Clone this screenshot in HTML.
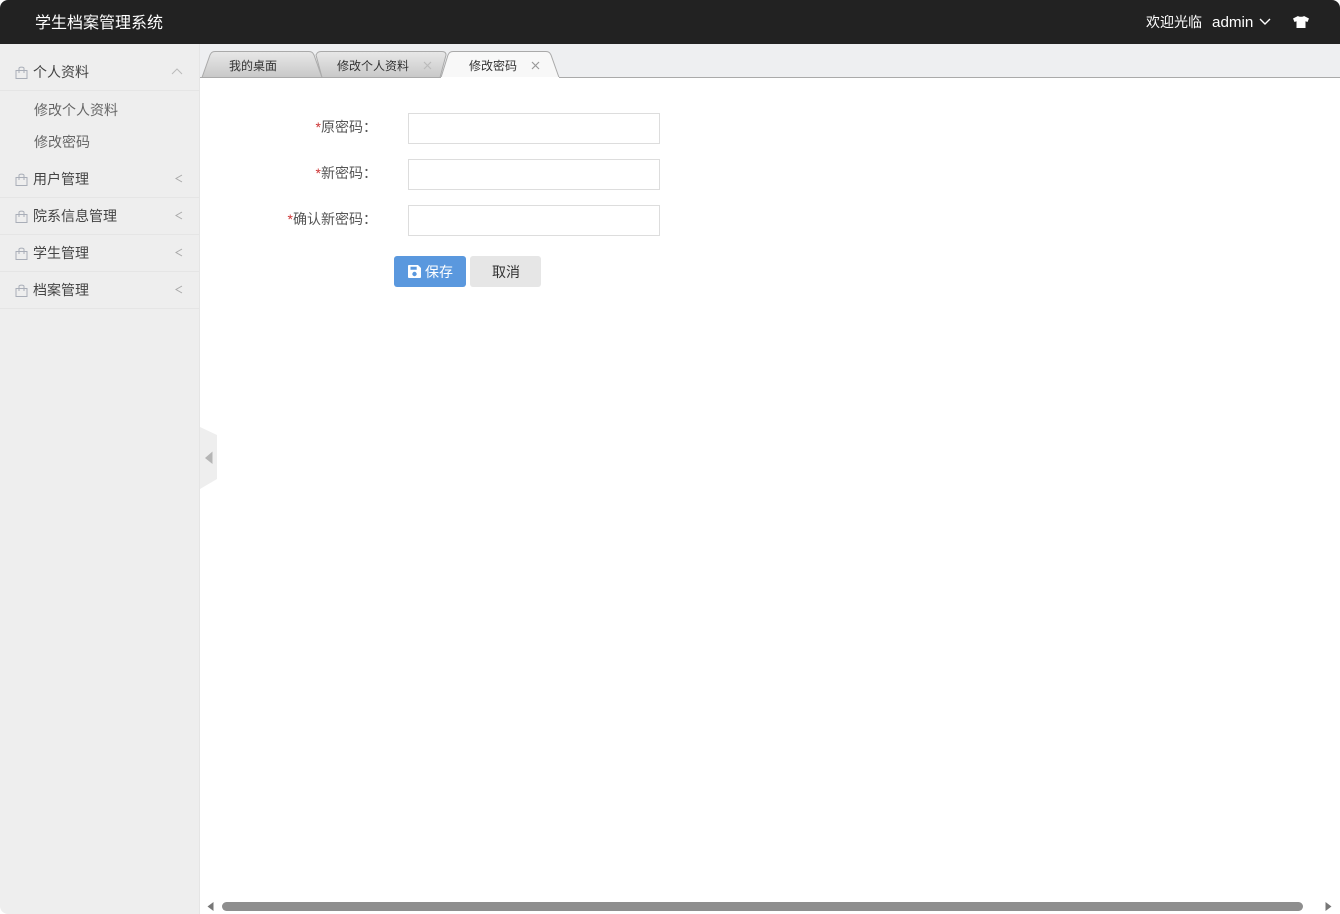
<!DOCTYPE html>
<html lang="zh"><head><meta charset="utf-8"><title>学生档案管理系统</title>
<style>
html,body{margin:0;padding:0;background:#fff}
body{width:1340px;height:914px;overflow:hidden;position:relative;font-family:"Liberation Sans","Noto Sans CJK SC",sans-serif;font-size:14px;color:#333}
#app{position:absolute;left:0;top:0;width:1340px;height:914px;overflow:hidden;border-radius:8px;background:#fff}
.a{position:absolute;white-space:nowrap;line-height:20px}
#top{left:0;top:0;width:1340px;height:44px;background:#222}
#side{left:0;top:44px;width:199px;height:870px;background:#eee;border-right:1px solid #e5e5e5}
#tabbar{left:200px;top:44px;width:1140px;height:33px;background:#eeeff1;border-bottom:1px solid #aaa}
.ln{position:absolute;left:0;width:199px;height:1px;background:#e5e5e5}
.m{color:#444;font-size:14px}
.s{color:#666;font-size:14px}
.lab{color:#555;font-size:14px;text-align:right}
.lab b{color:#c33;font-weight:normal}
.inp{position:absolute;left:408px;width:250px;height:29px;border:1px solid #ddd;background:#fff}
</style></head><body><div id="app">
<div class="a" id="top"></div>
<div class="a" style="left:35px;top:12px;font-size:16px;line-height:22px;color:#fff;transform:translateY(1px)">学生档案管理系统</div>
<div class="a" style="left:1146px;top:12px;font-size:14px;color:#fff">欢迎光临</div>
<div class="a" style="left:1212px;top:13px;font-size:15.2px;line-height:20px;color:#fff">admin</div>
<svg class="a" style="left:1258px;top:17px" width="14" height="10" viewBox="0 0 14 10"><path d="M2 2L7 7L12 2" fill="none" stroke="#fff" stroke-width="1.4"/></svg>
<svg class="a" style="left:1292px;top:15px" width="18" height="14" viewBox="0 0 18 14"><path d="M6 1L1 3.500L2.500 7L4.500 6.200V13H13.500V6.200L15.500 7L17 3.500L12 1C11 2 7 2 6 1Z" fill="#fff"/></svg>
<div class="a" style="left:696px;top:44px;width:3px;height:1px;background:#999"></div>
<div class="a" style="left:1197px;top:44px;width:3px;height:1px;background:#999"></div>

<div class="a" id="side">
<div class="ln" style="top:46px"></div><div class="ln" style="top:153px"></div><div class="ln" style="top:190px"></div><div class="ln" style="top:227px"></div><div class="ln" style="top:264px"></div>
</div>
<svg class="a" style="left:15px;top:66px" width="13" height="13" viewBox="0 0 13 13"><path d="M1 4.500H12V12.500H1ZM4 7V2.500C4 .7 9 .7 9 2.500V7" fill="none" stroke="#a9aeb8"/></svg>
<svg class="a" style="left:15px;top:173px" width="13" height="13" viewBox="0 0 13 13"><path d="M1 4.500H12V12.500H1ZM4 7V2.500C4 .7 9 .7 9 2.500V7" fill="none" stroke="#a9aeb8"/></svg>
<svg class="a" style="left:15px;top:210px" width="13" height="13" viewBox="0 0 13 13"><path d="M1 4.500H12V12.500H1ZM4 7V2.500C4 .7 9 .7 9 2.500V7" fill="none" stroke="#a9aeb8"/></svg>
<svg class="a" style="left:15px;top:247px" width="13" height="13" viewBox="0 0 13 13"><path d="M1 4.500H12V12.500H1ZM4 7V2.500C4 .7 9 .7 9 2.500V7" fill="none" stroke="#a9aeb8"/></svg>
<svg class="a" style="left:15px;top:284px" width="13" height="13" viewBox="0 0 13 13"><path d="M1 4.500H12V12.500H1ZM4 7V2.500C4 .7 9 .7 9 2.500V7" fill="none" stroke="#a9aeb8"/></svg>
<div class="a m" style="left:33px;top:62px">个人资料</div>
<div class="a s" style="left:34px;top:100px">修改个人资料</div>
<div class="a s" style="left:34px;top:132px">修改密码</div>
<div class="a m" style="left:33px;top:169px">用户管理</div>
<div class="a m" style="left:33px;top:206px">院系信息管理</div>
<div class="a m" style="left:33px;top:243px">学生管理</div>
<div class="a m" style="left:33px;top:280px">档案管理</div>
<svg class="a" style="left:171px;top:67px" width="12" height="9" viewBox="0 0 12 9"><path d="M1 7L6 2L11 7" fill="none" stroke="#bbb" stroke-width="1"/></svg>
<svg class="a" style="left:175px;top:174px" width="8" height="9" viewBox="0 0 8 9"><path d="M7 1L1 4.500L7 8" fill="none" stroke="#aaa" stroke-width="1"/></svg>
<svg class="a" style="left:175px;top:211px" width="8" height="9" viewBox="0 0 8 9"><path d="M7 1L1 4.500L7 8" fill="none" stroke="#aaa" stroke-width="1"/></svg>
<svg class="a" style="left:175px;top:248px" width="8" height="9" viewBox="0 0 8 9"><path d="M7 1L1 4.500L7 8" fill="none" stroke="#aaa" stroke-width="1"/></svg>
<svg class="a" style="left:175px;top:285px" width="8" height="9" viewBox="0 0 8 9"><path d="M7 1L1 4.500L7 8" fill="none" stroke="#aaa" stroke-width="1"/></svg>

<div class="a" id="tabbar"></div>
<svg class="a" style="left:200px;top:44px" width="370" height="34" viewBox="0 0 370 34">
<defs><linearGradient id="g" x1="0" y1="0" x2="0" y2="1"><stop offset="0" stop-color="#e8e8e8"/><stop offset="1" stop-color="#c8c8c8"/></linearGradient></defs>
<path d="M116 11C117 9 118 7.500 121 7.500H242C245 7.500 246 9 246 11L240 33.500H122Z" fill="url(#g)" stroke="#aaa"/>
<path d="M2 33.500L10 11C11 9 12 7.500 15 7.500H109C112 7.500 113 9 114 11L122 33.500Z" fill="url(#g)" stroke="#aaa"/>
<path d="M241 33.500L248 11C249 9 250 7.500 253 7.500H346C349 7.500 350 9 351 11L359 33.500" fill="#f8f8f8" stroke="#aaa"/>
<rect x="241" y="33" width="118" height="2" fill="#fff"/>
</svg>
<div class="a" style="left:229px;top:56px;font-size:12px;color:#333">我的桌面</div>
<div class="a" style="left:337px;top:56px;font-size:12px;color:#333">修改个人资料</div>
<div class="a" style="left:469px;top:56px;font-size:12px;color:#333">修改密码</div>
<svg class="a" style="left:423px;top:61px" width="9" height="9" viewBox="0 0 9 9"><path d="M1 1L8 8M8 1L1 8" stroke="#bbb" stroke-width="1.2"/></svg>
<svg class="a" style="left:531px;top:61px" width="9" height="9" viewBox="0 0 9 9"><path d="M1 1L8 8M8 1L1 8" stroke="#999" stroke-width="1.2"/></svg>

<div class="a lab" style="left:277px;width:100px;top:117px"><b>*</b>原密码：</div>
<div class="a lab" style="left:277px;width:100px;top:163px"><b>*</b>新密码：</div>
<div class="a lab" style="left:277px;width:100px;top:209px"><b>*</b>确认新密码：</div>
<div class="inp" style="top:113px"></div><div class="inp" style="top:159px"></div><div class="inp" style="top:205px"></div>

<div class="a" style="left:394px;top:256px;width:72px;height:31px;background:#5a98de;border-radius:3px"></div>
<svg class="a" style="left:408px;top:265px" width="13" height="13" viewBox="0 0 13 13"><path fill-rule="evenodd" d="M1 0H10L13 3V12C13 12.600 12.600 13 12 13H1C.4 13 0 12.600 0 12V1C0 .4 .4 0 1 0ZM2.500 1.800V4.800H8.700V1.800ZM6.500 6.800A2.200 2.200 0 1 0 6.500 11.200A2.200 2.200 0 1 0 6.500 6.800Z" fill="#fff"/></svg>
<div class="a" style="left:425px;top:262px;color:#fff">保存</div>
<div class="a" style="left:470px;top:256px;width:71px;height:31px;background:#e6e6e6;border-radius:3px"></div>
<div class="a" style="left:492px;top:262px;color:#333">取消</div>

<svg class="a" style="left:200px;top:427px" width="18" height="62" viewBox="0 0 18 62"><path d="M0 0L17 8V52L0 62Z" fill="#eee"/><path d="M12.500 24.500V37L5 31Z" fill="#b5b5b5"/></svg>

<div class="a" style="left:222px;top:902px;width:1081px;height:9px;background:#8e8e8e;border-radius:5px"></div>
<svg class="a" style="left:207px;top:902px" width="7" height="9" viewBox="0 0 7 9"><path d="M6.500 0V9L.5 4.500Z" fill="#777"/></svg>
<svg class="a" style="left:1325px;top:902px" width="7" height="9" viewBox="0 0 7 9"><path d="M.5 0V9L6.500 4.500Z" fill="#777"/></svg>
</div></body></html>
